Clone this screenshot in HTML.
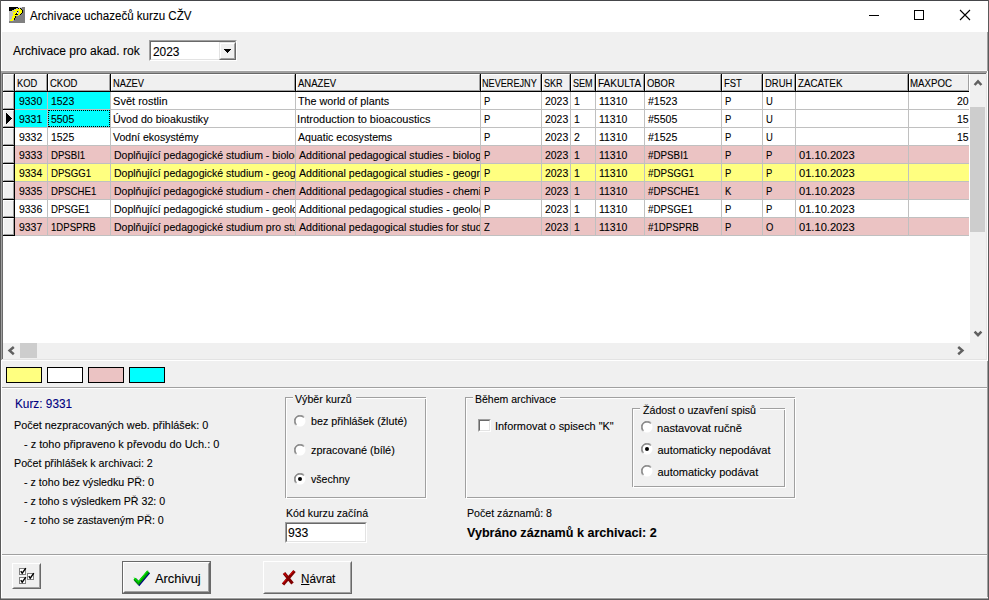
<!DOCTYPE html><html><head><meta charset="utf-8"><title>Archivace</title><style>*{margin:0;padding:0;box-sizing:border-box}
html,body{width:989px;height:600px;overflow:hidden}
body{position:relative;background:#f0f0f0;font-family:"Liberation Sans",sans-serif;font-size:11px;color:#000}
.a{position:absolute}
.t{position:absolute;white-space:pre;line-height:20px;transform-origin:0 0;-webkit-text-stroke:0.1px currentColor}
</style></head><body>
<div class="a" style="left:1px;top:1px;width:987px;height:31px;background:#fff"></div>
<svg class="a" style="left:9px;top:7px" width="16" height="16" viewBox="0 0 16 16" shape-rendering="crispEdges"><rect x="0" y="0" width="9" height="1" fill="#000"/><rect x="9" y="0" width="4" height="1" fill="#d8d8e8"/><rect x="13" y="0" width="3" height="1" fill="#808080"/><rect x="0" y="1" width="7" height="1" fill="#000"/><rect x="7" y="1" width="2" height="1" fill="#a8a8d8"/><rect x="9" y="1" width="1" height="1" fill="#000"/><rect x="10" y="1" width="1" height="1" fill="#ffff00"/><rect x="11" y="1" width="1" height="1" fill="#000"/><rect x="12" y="1" width="4" height="1" fill="#808080"/><rect x="0" y="2" width="5" height="1" fill="#000"/><rect x="5" y="2" width="1" height="1" fill="#a8a8d8"/><rect x="6" y="2" width="6" height="1" fill="#ffff00"/><rect x="12" y="2" width="1" height="1" fill="#000"/><rect x="13" y="2" width="3" height="1" fill="#808080"/><rect x="0" y="3" width="3" height="1" fill="#000"/><rect x="3" y="3" width="1" height="1" fill="#a8a8d8"/><rect x="4" y="3" width="9" height="1" fill="#ffff00"/><rect x="13" y="3" width="1" height="1" fill="#000"/><rect x="14" y="3" width="2" height="1" fill="#808080"/><rect x="0" y="4" width="3" height="1" fill="#c0c0c0"/><rect x="3" y="4" width="1" height="1" fill="#ffff00"/><rect x="4" y="4" width="2" height="1" fill="#a8a8d8"/><rect x="6" y="4" width="2" height="1" fill="#ffff00"/><rect x="8" y="4" width="1" height="1" fill="#000"/><rect x="9" y="4" width="1" height="1" fill="#a8a8d8"/><rect x="10" y="4" width="3" height="1" fill="#ffff00"/><rect x="13" y="4" width="1" height="1" fill="#000"/><rect x="14" y="4" width="2" height="1" fill="#808080"/><rect x="0" y="5" width="4" height="1" fill="#c0c0c0"/><rect x="4" y="5" width="4" height="1" fill="#ffff00"/><rect x="8" y="5" width="1" height="1" fill="#d8d8e8"/><rect x="9" y="5" width="1" height="1" fill="#a8a8d8"/><rect x="10" y="5" width="3" height="1" fill="#ffff00"/><rect x="13" y="5" width="1" height="1" fill="#000"/><rect x="14" y="5" width="2" height="1" fill="#808080"/><rect x="0" y="6" width="4" height="1" fill="#c0c0c0"/><rect x="4" y="6" width="3" height="1" fill="#ffff00"/><rect x="7" y="6" width="1" height="1" fill="#000"/><rect x="8" y="6" width="1" height="1" fill="#d8d8e8"/><rect x="9" y="6" width="3" height="1" fill="#ffff00"/><rect x="12" y="6" width="1" height="1" fill="#000"/><rect x="13" y="6" width="3" height="1" fill="#808080"/><rect x="0" y="7" width="4" height="1" fill="#c0c0c0"/><rect x="4" y="7" width="2" height="1" fill="#ffff00"/><rect x="6" y="7" width="3" height="1" fill="#000"/><rect x="9" y="7" width="2" height="1" fill="#ffff00"/><rect x="11" y="7" width="1" height="1" fill="#000"/><rect x="12" y="7" width="4" height="1" fill="#808080"/><rect x="0" y="8" width="4" height="1" fill="#c0c0c0"/><rect x="4" y="8" width="5" height="1" fill="#ffff00"/><rect x="9" y="8" width="1" height="1" fill="#a8a8d8"/><rect x="10" y="8" width="6" height="1" fill="#808080"/><rect x="0" y="9" width="3" height="1" fill="#c0c0c0"/><rect x="3" y="9" width="3" height="1" fill="#ffff00"/><rect x="6" y="9" width="1" height="1" fill="#000"/><rect x="7" y="9" width="9" height="1" fill="#808080"/><rect x="0" y="10" width="3" height="1" fill="#c0c0c0"/><rect x="3" y="10" width="3" height="1" fill="#ffff00"/><rect x="6" y="10" width="1" height="1" fill="#000"/><rect x="7" y="10" width="9" height="1" fill="#808080"/><rect x="0" y="11" width="3" height="1" fill="#c0c0c0"/><rect x="3" y="11" width="2" height="1" fill="#ffff00"/><rect x="5" y="11" width="1" height="1" fill="#000"/><rect x="6" y="11" width="10" height="1" fill="#808080"/><rect x="0" y="12" width="2" height="1" fill="#c0c0c0"/><rect x="2" y="12" width="3" height="1" fill="#ffff00"/><rect x="5" y="12" width="1" height="1" fill="#000"/><rect x="6" y="12" width="10" height="1" fill="#808080"/><rect x="0" y="13" width="1" height="1" fill="#c0c0c0"/><rect x="1" y="13" width="3" height="1" fill="#ffff00"/><rect x="4" y="13" width="1" height="1" fill="#a8a8d8"/><rect x="5" y="13" width="11" height="1" fill="#808080"/><rect x="0" y="14" width="16" height="1" fill="#808080"/><rect x="0" y="15" width="16" height="1" fill="#808080"/></svg>
<div class="t" style="left:30.00px;top:6px;font-size:12px;transform:scaleX(0.9648);">Archivace uchazečů kurzu CŽV</div>
<div class="a" style="left:869px;top:15px;width:10px;height:1px;background:#000"></div>
<div class="a" style="left:914px;top:10px;width:10px;height:10px;border:1px solid #000"></div>
<svg class="a" style="left:959px;top:9px" width="12" height="12" viewBox="0 0 12 12"><path d="M1 1L11 11M11 1L1 11" stroke="#000" stroke-width="1.1"/></svg>
<div class="a" style="left:1px;top:32px;width:1px;height:39px;background:#fff"></div>
<div class="a" style="left:987px;top:32px;width:1px;height:39px;background:#a0a0a0"></div>
<div class="t" style="left:13.30px;top:41px;font-size:12px;transform:scaleX(1.0050);">Archivace pro akad. rok</div>
<div class="a" style="left:149px;top:40px;width:88px;height:21px;background:#fff;border:1px solid;border-color:#a0a0a0 #fff #fff #a0a0a0"></div>
<div class="a" style="left:150px;top:41px;width:86px;height:19px;border:1px solid;border-color:#696969 #e3e3e3 #e3e3e3 #696969"></div>
<div class="t" style="left:153.40px;top:42px;font-size:12px;transform:scaleX(0.9918);">2023</div>
<div class="a" style="left:219px;top:42px;width:17px;height:18px;background:#f0f0f0;border:1px solid;border-color:#e3e3e3 #696969 #696969 #e3e3e3"></div>
<div class="a" style="left:220px;top:43px;width:15px;height:16px;border:1px solid;border-color:#fff #a0a0a0 #a0a0a0 #fff"></div>
<svg class="a" style="left:224px;top:49px" width="7" height="4" viewBox="0 0 7 4" shape-rendering="crispEdges"><rect x="0" y="0" width="7" height="1"/><rect x="1" y="1" width="5" height="1"/><rect x="2" y="2" width="3" height="1"/><rect x="3" y="3" width="1" height="1"/></svg>
<div class="a" style="left:1px;top:70px;width:986px;height:1px;background:#f8f8f8"></div>
<div class="a" style="left:1px;top:71px;width:987px;height:290px;background:#fff"></div>
<div class="a" style="left:1px;top:71px;width:987px;height:2px;background:#a0a0a0"></div>
<div class="a" style="left:1px;top:71px;width:1px;height:289px;background:#a0a0a0"></div>
<div class="a" style="left:2px;top:73px;width:985px;height:1px;background:#696969"></div>
<div class="a" style="left:2px;top:73px;width:1px;height:286px;background:#696969"></div>
<div class="a" style="left:987px;top:71px;width:1px;height:290px;background:#fff"></div>
<div class="a" style="left:1px;top:360px;width:987px;height:1px;background:#fff"></div>
<div class="a" style="left:2px;top:359px;width:985px;height:1px;background:#e3e3e3"></div>
<div class="a" style="left:986px;top:73px;width:1px;height:287px;background:#e3e3e3"></div>
<div class="a" style="left:3px;top:74px;width:11px;height:17px;background:#f0f0f0;border-top:1px solid #fff;border-left:1px solid #fff;border-right:1px solid #a0a0a0;border-bottom:1px solid #a0a0a0"></div>
<div class="a" style="left:14px;top:74px;width:1px;height:18px;background:#000"></div>
<div class="a" style="left:15px;top:74px;width:32px;height:17px;background:#f0f0f0;border-top:1px solid #fff;border-left:1px solid #fff;border-right:1px solid #a0a0a0;border-bottom:1px solid #a0a0a0"></div>
<div class="a" style="left:47px;top:74px;width:1px;height:18px;background:#000"></div>
<div class="t" style="left:16.70px;top:73px;transform:scaleX(0.8496);">KOD</div>
<div class="a" style="left:48px;top:74px;width:62px;height:17px;background:#f0f0f0;border-top:1px solid #fff;border-left:1px solid #fff;border-right:1px solid #a0a0a0;border-bottom:1px solid #a0a0a0"></div>
<div class="a" style="left:110px;top:74px;width:1px;height:18px;background:#000"></div>
<div class="t" style="left:49.70px;top:73px;transform:scaleX(0.8638);">CKOD</div>
<div class="a" style="left:111px;top:74px;width:184px;height:17px;background:#f0f0f0;border-top:1px solid #fff;border-left:1px solid #fff;border-right:1px solid #a0a0a0;border-bottom:1px solid #a0a0a0"></div>
<div class="a" style="left:295px;top:74px;width:1px;height:18px;background:#000"></div>
<div class="t" style="left:112.80px;top:73px;transform:scaleX(0.8463);">NAZEV</div>
<div class="a" style="left:296px;top:74px;width:184px;height:17px;background:#f0f0f0;border-top:1px solid #fff;border-left:1px solid #fff;border-right:1px solid #a0a0a0;border-bottom:1px solid #a0a0a0"></div>
<div class="a" style="left:480px;top:74px;width:1px;height:18px;background:#000"></div>
<div class="t" style="left:297.50px;top:73px;transform:scaleX(0.8663);">ANAZEV</div>
<div class="a" style="left:481px;top:74px;width:60px;height:17px;background:#f0f0f0;border-top:1px solid #fff;border-left:1px solid #fff;border-right:1px solid #a0a0a0;border-bottom:1px solid #a0a0a0"></div>
<div class="a" style="left:541px;top:74px;width:1px;height:18px;background:#000"></div>
<div class="t" style="left:482.40px;top:73px;transform:scaleX(0.8293);">NEVEREJNY</div>
<div class="a" style="left:542px;top:74px;width:28px;height:17px;background:#f0f0f0;border-top:1px solid #fff;border-left:1px solid #fff;border-right:1px solid #a0a0a0;border-bottom:1px solid #a0a0a0"></div>
<div class="a" style="left:570px;top:74px;width:1px;height:18px;background:#000"></div>
<div class="t" style="left:543.50px;top:73px;transform:scaleX(0.8247);">SKR</div>
<div class="a" style="left:571px;top:74px;width:24px;height:17px;background:#f0f0f0;border-top:1px solid #fff;border-left:1px solid #fff;border-right:1px solid #a0a0a0;border-bottom:1px solid #a0a0a0"></div>
<div class="a" style="left:595px;top:74px;width:1px;height:18px;background:#000"></div>
<div class="t" style="left:572.50px;top:73px;transform:scaleX(0.8237);">SEM</div>
<div class="a" style="left:596px;top:74px;width:48px;height:17px;background:#f0f0f0;border-top:1px solid #fff;border-left:1px solid #fff;border-right:1px solid #a0a0a0;border-bottom:1px solid #a0a0a0"></div>
<div class="a" style="left:644px;top:74px;width:1px;height:18px;background:#000"></div>
<div class="t" style="left:597.50px;top:73px;transform:scaleX(0.9117);">FAKULTA</div>
<div class="a" style="left:645px;top:74px;width:76px;height:17px;background:#f0f0f0;border-top:1px solid #fff;border-left:1px solid #fff;border-right:1px solid #a0a0a0;border-bottom:1px solid #a0a0a0"></div>
<div class="a" style="left:721px;top:74px;width:1px;height:18px;background:#000"></div>
<div class="t" style="left:646.70px;top:73px;transform:scaleX(0.8567);">OBOR</div>
<div class="a" style="left:722px;top:74px;width:40px;height:17px;background:#f0f0f0;border-top:1px solid #fff;border-left:1px solid #fff;border-right:1px solid #a0a0a0;border-bottom:1px solid #a0a0a0"></div>
<div class="a" style="left:762px;top:74px;width:1px;height:18px;background:#000"></div>
<div class="t" style="left:723.80px;top:73px;transform:scaleX(0.8549);">FST</div>
<div class="a" style="left:763px;top:74px;width:32px;height:17px;background:#f0f0f0;border-top:1px solid #fff;border-left:1px solid #fff;border-right:1px solid #a0a0a0;border-bottom:1px solid #a0a0a0"></div>
<div class="a" style="left:795px;top:74px;width:1px;height:18px;background:#000"></div>
<div class="t" style="left:764.70px;top:73px;transform:scaleX(0.8576);">DRUH</div>
<div class="a" style="left:796px;top:74px;width:112px;height:17px;background:#f0f0f0;border-top:1px solid #fff;border-left:1px solid #fff;border-right:1px solid #a0a0a0;border-bottom:1px solid #a0a0a0"></div>
<div class="a" style="left:908px;top:74px;width:1px;height:18px;background:#000"></div>
<div class="t" style="left:797.50px;top:73px;transform:scaleX(0.8897);">ZACATEK</div>
<div class="a" style="left:909px;top:74px;width:60px;height:17px;background:#f0f0f0;border-top:1px solid #fff;border-left:1px solid #fff;border-right:1px solid #a0a0a0;border-bottom:1px solid #a0a0a0"></div>
<div class="t" style="left:910.20px;top:73px;transform:scaleX(0.8800);">MAXPOC</div>
<div class="a" style="left:3px;top:91px;width:966px;height:1px;background:#000"></div>
<div class="a" style="left:3px;top:92px;width:11px;height:17px;background:#f0f0f0;border-top:1px solid #fff;border-left:1px solid #fff;border-right:1px solid #a0a0a0;border-bottom:1px solid #a0a0a0"></div>
<div class="a" style="left:3px;top:109px;width:12px;height:1px;background:#000"></div>
<div class="a" style="left:14px;top:92px;width:1px;height:17px;background:#000"></div>
<div class="a" style="left:15px;top:92px;width:32px;height:17px;background:#00ffff"></div>
<div class="a" style="left:47px;top:92px;width:1px;height:18px;background:#c0c0c0"></div>
<div class="a" style="left:48px;top:92px;width:62px;height:17px;background:#00ffff"></div>
<div class="a" style="left:110px;top:92px;width:1px;height:18px;background:#c0c0c0"></div>
<div class="a" style="left:111px;top:92px;width:184px;height:17px;background:#ffffff"></div>
<div class="a" style="left:295px;top:92px;width:1px;height:18px;background:#c0c0c0"></div>
<div class="a" style="left:296px;top:92px;width:184px;height:17px;background:#ffffff"></div>
<div class="a" style="left:480px;top:92px;width:1px;height:18px;background:#c0c0c0"></div>
<div class="a" style="left:481px;top:92px;width:60px;height:17px;background:#ffffff"></div>
<div class="a" style="left:541px;top:92px;width:1px;height:18px;background:#c0c0c0"></div>
<div class="a" style="left:542px;top:92px;width:28px;height:17px;background:#ffffff"></div>
<div class="a" style="left:570px;top:92px;width:1px;height:18px;background:#c0c0c0"></div>
<div class="a" style="left:571px;top:92px;width:24px;height:17px;background:#ffffff"></div>
<div class="a" style="left:595px;top:92px;width:1px;height:18px;background:#c0c0c0"></div>
<div class="a" style="left:596px;top:92px;width:48px;height:17px;background:#ffffff"></div>
<div class="a" style="left:644px;top:92px;width:1px;height:18px;background:#c0c0c0"></div>
<div class="a" style="left:645px;top:92px;width:76px;height:17px;background:#ffffff"></div>
<div class="a" style="left:721px;top:92px;width:1px;height:18px;background:#c0c0c0"></div>
<div class="a" style="left:722px;top:92px;width:40px;height:17px;background:#ffffff"></div>
<div class="a" style="left:762px;top:92px;width:1px;height:18px;background:#c0c0c0"></div>
<div class="a" style="left:763px;top:92px;width:32px;height:17px;background:#ffffff"></div>
<div class="a" style="left:795px;top:92px;width:1px;height:18px;background:#c0c0c0"></div>
<div class="a" style="left:796px;top:92px;width:112px;height:17px;background:#ffffff"></div>
<div class="a" style="left:908px;top:92px;width:1px;height:18px;background:#c0c0c0"></div>
<div class="a" style="left:909px;top:92px;width:60px;height:17px;background:#ffffff"></div>
<div class="a" style="left:15px;top:109px;width:954px;height:1px;background:#c0c0c0"></div>
<div class="a" style="left:3px;top:110px;width:11px;height:17px;background:#f0f0f0;border-top:1px solid #fff;border-left:1px solid #fff;border-right:1px solid #a0a0a0;border-bottom:1px solid #a0a0a0"></div>
<div class="a" style="left:3px;top:127px;width:12px;height:1px;background:#000"></div>
<div class="a" style="left:14px;top:110px;width:1px;height:17px;background:#000"></div>
<svg class="a" style="left:6px;top:113px" width="6" height="11" shape-rendering="crispEdges"><rect x="0" y="0" width="1" height="1"/><rect x="0" y="1" width="2" height="1"/><rect x="0" y="2" width="3" height="1"/><rect x="0" y="3" width="4" height="1"/><rect x="0" y="4" width="5" height="1"/><rect x="0" y="5" width="6" height="1"/><rect x="0" y="6" width="5" height="1"/><rect x="0" y="7" width="4" height="1"/><rect x="0" y="8" width="3" height="1"/><rect x="0" y="9" width="2" height="1"/><rect x="0" y="10" width="1" height="1"/></svg>
<div class="a" style="left:15px;top:110px;width:32px;height:17px;background:#00ffff"></div>
<div class="a" style="left:47px;top:110px;width:1px;height:18px;background:#c0c0c0"></div>
<div class="a" style="left:48px;top:110px;width:62px;height:17px;background:#00ffff"></div>
<div class="a" style="left:110px;top:110px;width:1px;height:18px;background:#c0c0c0"></div>
<div class="a" style="left:111px;top:110px;width:184px;height:17px;background:#ffffff"></div>
<div class="a" style="left:295px;top:110px;width:1px;height:18px;background:#c0c0c0"></div>
<div class="a" style="left:296px;top:110px;width:184px;height:17px;background:#ffffff"></div>
<div class="a" style="left:480px;top:110px;width:1px;height:18px;background:#c0c0c0"></div>
<div class="a" style="left:481px;top:110px;width:60px;height:17px;background:#ffffff"></div>
<div class="a" style="left:541px;top:110px;width:1px;height:18px;background:#c0c0c0"></div>
<div class="a" style="left:542px;top:110px;width:28px;height:17px;background:#ffffff"></div>
<div class="a" style="left:570px;top:110px;width:1px;height:18px;background:#c0c0c0"></div>
<div class="a" style="left:571px;top:110px;width:24px;height:17px;background:#ffffff"></div>
<div class="a" style="left:595px;top:110px;width:1px;height:18px;background:#c0c0c0"></div>
<div class="a" style="left:596px;top:110px;width:48px;height:17px;background:#ffffff"></div>
<div class="a" style="left:644px;top:110px;width:1px;height:18px;background:#c0c0c0"></div>
<div class="a" style="left:645px;top:110px;width:76px;height:17px;background:#ffffff"></div>
<div class="a" style="left:721px;top:110px;width:1px;height:18px;background:#c0c0c0"></div>
<div class="a" style="left:722px;top:110px;width:40px;height:17px;background:#ffffff"></div>
<div class="a" style="left:762px;top:110px;width:1px;height:18px;background:#c0c0c0"></div>
<div class="a" style="left:763px;top:110px;width:32px;height:17px;background:#ffffff"></div>
<div class="a" style="left:795px;top:110px;width:1px;height:18px;background:#c0c0c0"></div>
<div class="a" style="left:796px;top:110px;width:112px;height:17px;background:#ffffff"></div>
<div class="a" style="left:908px;top:110px;width:1px;height:18px;background:#c0c0c0"></div>
<div class="a" style="left:909px;top:110px;width:60px;height:17px;background:#ffffff"></div>
<div class="a" style="left:15px;top:127px;width:954px;height:1px;background:#c0c0c0"></div>
<div class="a" style="left:3px;top:128px;width:11px;height:17px;background:#f0f0f0;border-top:1px solid #fff;border-left:1px solid #fff;border-right:1px solid #a0a0a0;border-bottom:1px solid #a0a0a0"></div>
<div class="a" style="left:3px;top:145px;width:12px;height:1px;background:#000"></div>
<div class="a" style="left:14px;top:128px;width:1px;height:17px;background:#000"></div>
<div class="a" style="left:15px;top:128px;width:32px;height:17px;background:#ffffff"></div>
<div class="a" style="left:47px;top:128px;width:1px;height:18px;background:#c0c0c0"></div>
<div class="a" style="left:48px;top:128px;width:62px;height:17px;background:#ffffff"></div>
<div class="a" style="left:110px;top:128px;width:1px;height:18px;background:#c0c0c0"></div>
<div class="a" style="left:111px;top:128px;width:184px;height:17px;background:#ffffff"></div>
<div class="a" style="left:295px;top:128px;width:1px;height:18px;background:#c0c0c0"></div>
<div class="a" style="left:296px;top:128px;width:184px;height:17px;background:#ffffff"></div>
<div class="a" style="left:480px;top:128px;width:1px;height:18px;background:#c0c0c0"></div>
<div class="a" style="left:481px;top:128px;width:60px;height:17px;background:#ffffff"></div>
<div class="a" style="left:541px;top:128px;width:1px;height:18px;background:#c0c0c0"></div>
<div class="a" style="left:542px;top:128px;width:28px;height:17px;background:#ffffff"></div>
<div class="a" style="left:570px;top:128px;width:1px;height:18px;background:#c0c0c0"></div>
<div class="a" style="left:571px;top:128px;width:24px;height:17px;background:#ffffff"></div>
<div class="a" style="left:595px;top:128px;width:1px;height:18px;background:#c0c0c0"></div>
<div class="a" style="left:596px;top:128px;width:48px;height:17px;background:#ffffff"></div>
<div class="a" style="left:644px;top:128px;width:1px;height:18px;background:#c0c0c0"></div>
<div class="a" style="left:645px;top:128px;width:76px;height:17px;background:#ffffff"></div>
<div class="a" style="left:721px;top:128px;width:1px;height:18px;background:#c0c0c0"></div>
<div class="a" style="left:722px;top:128px;width:40px;height:17px;background:#ffffff"></div>
<div class="a" style="left:762px;top:128px;width:1px;height:18px;background:#c0c0c0"></div>
<div class="a" style="left:763px;top:128px;width:32px;height:17px;background:#ffffff"></div>
<div class="a" style="left:795px;top:128px;width:1px;height:18px;background:#c0c0c0"></div>
<div class="a" style="left:796px;top:128px;width:112px;height:17px;background:#ffffff"></div>
<div class="a" style="left:908px;top:128px;width:1px;height:18px;background:#c0c0c0"></div>
<div class="a" style="left:909px;top:128px;width:60px;height:17px;background:#ffffff"></div>
<div class="a" style="left:15px;top:145px;width:954px;height:1px;background:#c0c0c0"></div>
<div class="a" style="left:3px;top:146px;width:11px;height:17px;background:#f0f0f0;border-top:1px solid #fff;border-left:1px solid #fff;border-right:1px solid #a0a0a0;border-bottom:1px solid #a0a0a0"></div>
<div class="a" style="left:3px;top:163px;width:12px;height:1px;background:#000"></div>
<div class="a" style="left:14px;top:146px;width:1px;height:17px;background:#000"></div>
<div class="a" style="left:15px;top:146px;width:32px;height:17px;background:#ebc3c3"></div>
<div class="a" style="left:47px;top:146px;width:1px;height:18px;background:#c0c0c0"></div>
<div class="a" style="left:48px;top:146px;width:62px;height:17px;background:#ebc3c3"></div>
<div class="a" style="left:110px;top:146px;width:1px;height:18px;background:#c0c0c0"></div>
<div class="a" style="left:111px;top:146px;width:184px;height:17px;background:#ebc3c3"></div>
<div class="a" style="left:295px;top:146px;width:1px;height:18px;background:#c0c0c0"></div>
<div class="a" style="left:296px;top:146px;width:184px;height:17px;background:#ebc3c3"></div>
<div class="a" style="left:480px;top:146px;width:1px;height:18px;background:#c0c0c0"></div>
<div class="a" style="left:481px;top:146px;width:60px;height:17px;background:#ebc3c3"></div>
<div class="a" style="left:541px;top:146px;width:1px;height:18px;background:#c0c0c0"></div>
<div class="a" style="left:542px;top:146px;width:28px;height:17px;background:#ebc3c3"></div>
<div class="a" style="left:570px;top:146px;width:1px;height:18px;background:#c0c0c0"></div>
<div class="a" style="left:571px;top:146px;width:24px;height:17px;background:#ebc3c3"></div>
<div class="a" style="left:595px;top:146px;width:1px;height:18px;background:#c0c0c0"></div>
<div class="a" style="left:596px;top:146px;width:48px;height:17px;background:#ebc3c3"></div>
<div class="a" style="left:644px;top:146px;width:1px;height:18px;background:#c0c0c0"></div>
<div class="a" style="left:645px;top:146px;width:76px;height:17px;background:#ebc3c3"></div>
<div class="a" style="left:721px;top:146px;width:1px;height:18px;background:#c0c0c0"></div>
<div class="a" style="left:722px;top:146px;width:40px;height:17px;background:#ebc3c3"></div>
<div class="a" style="left:762px;top:146px;width:1px;height:18px;background:#c0c0c0"></div>
<div class="a" style="left:763px;top:146px;width:32px;height:17px;background:#ebc3c3"></div>
<div class="a" style="left:795px;top:146px;width:1px;height:18px;background:#c0c0c0"></div>
<div class="a" style="left:796px;top:146px;width:112px;height:17px;background:#ebc3c3"></div>
<div class="a" style="left:908px;top:146px;width:1px;height:18px;background:#c0c0c0"></div>
<div class="a" style="left:909px;top:146px;width:60px;height:17px;background:#ebc3c3"></div>
<div class="a" style="left:15px;top:163px;width:954px;height:1px;background:#c0c0c0"></div>
<div class="a" style="left:3px;top:164px;width:11px;height:17px;background:#f0f0f0;border-top:1px solid #fff;border-left:1px solid #fff;border-right:1px solid #a0a0a0;border-bottom:1px solid #a0a0a0"></div>
<div class="a" style="left:3px;top:181px;width:12px;height:1px;background:#000"></div>
<div class="a" style="left:14px;top:164px;width:1px;height:17px;background:#000"></div>
<div class="a" style="left:15px;top:164px;width:32px;height:17px;background:#ffff80"></div>
<div class="a" style="left:47px;top:164px;width:1px;height:18px;background:#c0c0c0"></div>
<div class="a" style="left:48px;top:164px;width:62px;height:17px;background:#ffff80"></div>
<div class="a" style="left:110px;top:164px;width:1px;height:18px;background:#c0c0c0"></div>
<div class="a" style="left:111px;top:164px;width:184px;height:17px;background:#ffff80"></div>
<div class="a" style="left:295px;top:164px;width:1px;height:18px;background:#c0c0c0"></div>
<div class="a" style="left:296px;top:164px;width:184px;height:17px;background:#ffff80"></div>
<div class="a" style="left:480px;top:164px;width:1px;height:18px;background:#c0c0c0"></div>
<div class="a" style="left:481px;top:164px;width:60px;height:17px;background:#ffff80"></div>
<div class="a" style="left:541px;top:164px;width:1px;height:18px;background:#c0c0c0"></div>
<div class="a" style="left:542px;top:164px;width:28px;height:17px;background:#ffff80"></div>
<div class="a" style="left:570px;top:164px;width:1px;height:18px;background:#c0c0c0"></div>
<div class="a" style="left:571px;top:164px;width:24px;height:17px;background:#ffff80"></div>
<div class="a" style="left:595px;top:164px;width:1px;height:18px;background:#c0c0c0"></div>
<div class="a" style="left:596px;top:164px;width:48px;height:17px;background:#ffff80"></div>
<div class="a" style="left:644px;top:164px;width:1px;height:18px;background:#c0c0c0"></div>
<div class="a" style="left:645px;top:164px;width:76px;height:17px;background:#ffff80"></div>
<div class="a" style="left:721px;top:164px;width:1px;height:18px;background:#c0c0c0"></div>
<div class="a" style="left:722px;top:164px;width:40px;height:17px;background:#ffff80"></div>
<div class="a" style="left:762px;top:164px;width:1px;height:18px;background:#c0c0c0"></div>
<div class="a" style="left:763px;top:164px;width:32px;height:17px;background:#ffff80"></div>
<div class="a" style="left:795px;top:164px;width:1px;height:18px;background:#c0c0c0"></div>
<div class="a" style="left:796px;top:164px;width:112px;height:17px;background:#ffff80"></div>
<div class="a" style="left:908px;top:164px;width:1px;height:18px;background:#c0c0c0"></div>
<div class="a" style="left:909px;top:164px;width:60px;height:17px;background:#ffff80"></div>
<div class="a" style="left:15px;top:181px;width:954px;height:1px;background:#c0c0c0"></div>
<div class="a" style="left:3px;top:182px;width:11px;height:17px;background:#f0f0f0;border-top:1px solid #fff;border-left:1px solid #fff;border-right:1px solid #a0a0a0;border-bottom:1px solid #a0a0a0"></div>
<div class="a" style="left:3px;top:199px;width:12px;height:1px;background:#000"></div>
<div class="a" style="left:14px;top:182px;width:1px;height:17px;background:#000"></div>
<div class="a" style="left:15px;top:182px;width:32px;height:17px;background:#ebc3c3"></div>
<div class="a" style="left:47px;top:182px;width:1px;height:18px;background:#c0c0c0"></div>
<div class="a" style="left:48px;top:182px;width:62px;height:17px;background:#ebc3c3"></div>
<div class="a" style="left:110px;top:182px;width:1px;height:18px;background:#c0c0c0"></div>
<div class="a" style="left:111px;top:182px;width:184px;height:17px;background:#ebc3c3"></div>
<div class="a" style="left:295px;top:182px;width:1px;height:18px;background:#c0c0c0"></div>
<div class="a" style="left:296px;top:182px;width:184px;height:17px;background:#ebc3c3"></div>
<div class="a" style="left:480px;top:182px;width:1px;height:18px;background:#c0c0c0"></div>
<div class="a" style="left:481px;top:182px;width:60px;height:17px;background:#ebc3c3"></div>
<div class="a" style="left:541px;top:182px;width:1px;height:18px;background:#c0c0c0"></div>
<div class="a" style="left:542px;top:182px;width:28px;height:17px;background:#ebc3c3"></div>
<div class="a" style="left:570px;top:182px;width:1px;height:18px;background:#c0c0c0"></div>
<div class="a" style="left:571px;top:182px;width:24px;height:17px;background:#ebc3c3"></div>
<div class="a" style="left:595px;top:182px;width:1px;height:18px;background:#c0c0c0"></div>
<div class="a" style="left:596px;top:182px;width:48px;height:17px;background:#ebc3c3"></div>
<div class="a" style="left:644px;top:182px;width:1px;height:18px;background:#c0c0c0"></div>
<div class="a" style="left:645px;top:182px;width:76px;height:17px;background:#ebc3c3"></div>
<div class="a" style="left:721px;top:182px;width:1px;height:18px;background:#c0c0c0"></div>
<div class="a" style="left:722px;top:182px;width:40px;height:17px;background:#ebc3c3"></div>
<div class="a" style="left:762px;top:182px;width:1px;height:18px;background:#c0c0c0"></div>
<div class="a" style="left:763px;top:182px;width:32px;height:17px;background:#ebc3c3"></div>
<div class="a" style="left:795px;top:182px;width:1px;height:18px;background:#c0c0c0"></div>
<div class="a" style="left:796px;top:182px;width:112px;height:17px;background:#ebc3c3"></div>
<div class="a" style="left:908px;top:182px;width:1px;height:18px;background:#c0c0c0"></div>
<div class="a" style="left:909px;top:182px;width:60px;height:17px;background:#ebc3c3"></div>
<div class="a" style="left:15px;top:199px;width:954px;height:1px;background:#c0c0c0"></div>
<div class="a" style="left:3px;top:200px;width:11px;height:17px;background:#f0f0f0;border-top:1px solid #fff;border-left:1px solid #fff;border-right:1px solid #a0a0a0;border-bottom:1px solid #a0a0a0"></div>
<div class="a" style="left:3px;top:217px;width:12px;height:1px;background:#000"></div>
<div class="a" style="left:14px;top:200px;width:1px;height:17px;background:#000"></div>
<div class="a" style="left:15px;top:200px;width:32px;height:17px;background:#ffffff"></div>
<div class="a" style="left:47px;top:200px;width:1px;height:18px;background:#c0c0c0"></div>
<div class="a" style="left:48px;top:200px;width:62px;height:17px;background:#ffffff"></div>
<div class="a" style="left:110px;top:200px;width:1px;height:18px;background:#c0c0c0"></div>
<div class="a" style="left:111px;top:200px;width:184px;height:17px;background:#ffffff"></div>
<div class="a" style="left:295px;top:200px;width:1px;height:18px;background:#c0c0c0"></div>
<div class="a" style="left:296px;top:200px;width:184px;height:17px;background:#ffffff"></div>
<div class="a" style="left:480px;top:200px;width:1px;height:18px;background:#c0c0c0"></div>
<div class="a" style="left:481px;top:200px;width:60px;height:17px;background:#ffffff"></div>
<div class="a" style="left:541px;top:200px;width:1px;height:18px;background:#c0c0c0"></div>
<div class="a" style="left:542px;top:200px;width:28px;height:17px;background:#ffffff"></div>
<div class="a" style="left:570px;top:200px;width:1px;height:18px;background:#c0c0c0"></div>
<div class="a" style="left:571px;top:200px;width:24px;height:17px;background:#ffffff"></div>
<div class="a" style="left:595px;top:200px;width:1px;height:18px;background:#c0c0c0"></div>
<div class="a" style="left:596px;top:200px;width:48px;height:17px;background:#ffffff"></div>
<div class="a" style="left:644px;top:200px;width:1px;height:18px;background:#c0c0c0"></div>
<div class="a" style="left:645px;top:200px;width:76px;height:17px;background:#ffffff"></div>
<div class="a" style="left:721px;top:200px;width:1px;height:18px;background:#c0c0c0"></div>
<div class="a" style="left:722px;top:200px;width:40px;height:17px;background:#ffffff"></div>
<div class="a" style="left:762px;top:200px;width:1px;height:18px;background:#c0c0c0"></div>
<div class="a" style="left:763px;top:200px;width:32px;height:17px;background:#ffffff"></div>
<div class="a" style="left:795px;top:200px;width:1px;height:18px;background:#c0c0c0"></div>
<div class="a" style="left:796px;top:200px;width:112px;height:17px;background:#ffffff"></div>
<div class="a" style="left:908px;top:200px;width:1px;height:18px;background:#c0c0c0"></div>
<div class="a" style="left:909px;top:200px;width:60px;height:17px;background:#ffffff"></div>
<div class="a" style="left:15px;top:217px;width:954px;height:1px;background:#c0c0c0"></div>
<div class="a" style="left:3px;top:218px;width:11px;height:17px;background:#f0f0f0;border-top:1px solid #fff;border-left:1px solid #fff;border-right:1px solid #a0a0a0;border-bottom:1px solid #a0a0a0"></div>
<div class="a" style="left:3px;top:235px;width:12px;height:1px;background:#000"></div>
<div class="a" style="left:14px;top:218px;width:1px;height:17px;background:#000"></div>
<div class="a" style="left:15px;top:218px;width:32px;height:17px;background:#ebc3c3"></div>
<div class="a" style="left:47px;top:218px;width:1px;height:18px;background:#c0c0c0"></div>
<div class="a" style="left:48px;top:218px;width:62px;height:17px;background:#ebc3c3"></div>
<div class="a" style="left:110px;top:218px;width:1px;height:18px;background:#c0c0c0"></div>
<div class="a" style="left:111px;top:218px;width:184px;height:17px;background:#ebc3c3"></div>
<div class="a" style="left:295px;top:218px;width:1px;height:18px;background:#c0c0c0"></div>
<div class="a" style="left:296px;top:218px;width:184px;height:17px;background:#ebc3c3"></div>
<div class="a" style="left:480px;top:218px;width:1px;height:18px;background:#c0c0c0"></div>
<div class="a" style="left:481px;top:218px;width:60px;height:17px;background:#ebc3c3"></div>
<div class="a" style="left:541px;top:218px;width:1px;height:18px;background:#c0c0c0"></div>
<div class="a" style="left:542px;top:218px;width:28px;height:17px;background:#ebc3c3"></div>
<div class="a" style="left:570px;top:218px;width:1px;height:18px;background:#c0c0c0"></div>
<div class="a" style="left:571px;top:218px;width:24px;height:17px;background:#ebc3c3"></div>
<div class="a" style="left:595px;top:218px;width:1px;height:18px;background:#c0c0c0"></div>
<div class="a" style="left:596px;top:218px;width:48px;height:17px;background:#ebc3c3"></div>
<div class="a" style="left:644px;top:218px;width:1px;height:18px;background:#c0c0c0"></div>
<div class="a" style="left:645px;top:218px;width:76px;height:17px;background:#ebc3c3"></div>
<div class="a" style="left:721px;top:218px;width:1px;height:18px;background:#c0c0c0"></div>
<div class="a" style="left:722px;top:218px;width:40px;height:17px;background:#ebc3c3"></div>
<div class="a" style="left:762px;top:218px;width:1px;height:18px;background:#c0c0c0"></div>
<div class="a" style="left:763px;top:218px;width:32px;height:17px;background:#ebc3c3"></div>
<div class="a" style="left:795px;top:218px;width:1px;height:18px;background:#c0c0c0"></div>
<div class="a" style="left:796px;top:218px;width:112px;height:17px;background:#ebc3c3"></div>
<div class="a" style="left:908px;top:218px;width:1px;height:18px;background:#c0c0c0"></div>
<div class="a" style="left:909px;top:218px;width:60px;height:17px;background:#ebc3c3"></div>
<div class="a" style="left:15px;top:235px;width:954px;height:1px;background:#c0c0c0"></div>
<div class="a" style="left:15px;top:92px;width:32px;height:144px;overflow:hidden">
<div class="t" style="left:4.36px;top:-1px;transform:scaleX(0.9500);">9330</div>
<div class="t" style="left:4.36px;top:17px;transform:scaleX(0.9500);">9331</div>
<div class="t" style="left:4.36px;top:35px;transform:scaleX(0.9500);">9332</div>
<div class="t" style="left:4.36px;top:53px;transform:scaleX(0.9500);">9333</div>
<div class="t" style="left:4.36px;top:71px;transform:scaleX(0.9500);">9334</div>
<div class="t" style="left:4.36px;top:89px;transform:scaleX(0.9500);">9335</div>
<div class="t" style="left:4.36px;top:107px;transform:scaleX(0.9500);">9336</div>
<div class="t" style="left:4.36px;top:125px;transform:scaleX(0.9500);">9337</div>
</div>
<div class="a" style="left:48px;top:92px;width:62px;height:144px;overflow:hidden">
<div class="t" style="left:3.00px;top:-1px;transform:scaleX(0.9500);">1523</div>
<div class="t" style="left:2.50px;top:17px;transform:scaleX(0.9500);">5505</div>
<div class="t" style="left:3.00px;top:35px;transform:scaleX(0.9500);">1525</div>
<div class="t" style="left:2.50px;top:53px;transform:scaleX(0.8741);">DPSBI1</div>
<div class="t" style="left:2.50px;top:71px;transform:scaleX(0.8720);">DPSGG1</div>
<div class="t" style="left:2.50px;top:89px;transform:scaleX(0.8706);">DPSCHE1</div>
<div class="t" style="left:2.50px;top:107px;transform:scaleX(0.8723);">DPSGE1</div>
<div class="t" style="left:3.00px;top:125px;transform:scaleX(0.8707);">1DPSPRB</div>
</div>
<div class="a" style="left:111px;top:92px;width:184px;height:144px;overflow:hidden">
<div class="t" style="left:2.10px;top:-1px;">Svět rostlin</div>
<div class="t" style="left:2.10px;top:17px;transform:scaleX(0.9703);">Úvod do bioakustiky</div>
<div class="t" style="left:2.10px;top:35px;transform:scaleX(0.9580);">Vodní ekosystémy</div>
<div class="t" style="left:2.60px;top:53px;transform:scaleX(0.9548);">Doplňující pedagogické studium - biologie</div>
<div class="t" style="left:2.60px;top:71px;transform:scaleX(0.9548);">Doplňující pedagogické studium - geografie</div>
<div class="t" style="left:2.60px;top:89px;transform:scaleX(0.9548);">Doplňující pedagogické studium - chemie</div>
<div class="t" style="left:2.60px;top:107px;transform:scaleX(0.9548);">Doplňující pedagogické studium - geologie</div>
<div class="t" style="left:2.60px;top:125px;transform:scaleX(0.9548);">Doplňující pedagogické studium pro studenty</div>
</div>
<div class="a" style="left:296px;top:92px;width:184px;height:144px;overflow:hidden">
<div class="t" style="left:2.10px;top:-1px;transform:scaleX(0.9803);">The world of plants</div>
<div class="t" style="left:1.10px;top:17px;">Introduction to bioacoustics</div>
<div class="t" style="left:2.10px;top:35px;transform:scaleX(0.9622);">Aquatic ecosystems</div>
<div class="t" style="left:2.50px;top:53px;transform:scaleX(0.9700);">Additional pedagogical studies - biology</div>
<div class="t" style="left:2.50px;top:71px;transform:scaleX(0.9702);">Additional pedagogical studies - geography</div>
<div class="t" style="left:2.50px;top:89px;transform:scaleX(0.9702);">Additional pedagogical studies - chemistry</div>
<div class="t" style="left:2.50px;top:107px;transform:scaleX(0.9701);">Additional pedagogical studies - geology</div>
<div class="t" style="left:2.50px;top:125px;transform:scaleX(0.9697);">Additional pedagogical studies for students</div>
</div>
<div class="a" style="left:481px;top:92px;width:60px;height:144px;overflow:hidden">
<div class="t" style="left:2.50px;top:-1px;transform:scaleX(0.8600);">P</div>
<div class="t" style="left:2.50px;top:17px;transform:scaleX(0.8600);">P</div>
<div class="t" style="left:2.50px;top:35px;transform:scaleX(0.8600);">P</div>
<div class="t" style="left:2.50px;top:53px;transform:scaleX(0.8600);">P</div>
<div class="t" style="left:2.50px;top:71px;transform:scaleX(0.8600);">P</div>
<div class="t" style="left:2.50px;top:89px;transform:scaleX(0.8600);">P</div>
<div class="t" style="left:2.50px;top:107px;transform:scaleX(0.8600);">P</div>
<div class="t" style="left:2.50px;top:125px;transform:scaleX(0.8600);">Z</div>
</div>
<div class="a" style="left:542px;top:92px;width:28px;height:144px;overflow:hidden">
<div class="t" style="left:2.50px;top:-1px;transform:scaleX(0.9500);">2023</div>
<div class="t" style="left:2.50px;top:17px;transform:scaleX(0.9500);">2023</div>
<div class="t" style="left:2.50px;top:35px;transform:scaleX(0.9500);">2023</div>
<div class="t" style="left:2.50px;top:53px;transform:scaleX(0.9500);">2023</div>
<div class="t" style="left:2.50px;top:71px;transform:scaleX(0.9500);">2023</div>
<div class="t" style="left:2.50px;top:89px;transform:scaleX(0.9500);">2023</div>
<div class="t" style="left:2.50px;top:107px;transform:scaleX(0.9500);">2023</div>
<div class="t" style="left:2.50px;top:125px;transform:scaleX(0.9500);">2023</div>
</div>
<div class="a" style="left:571px;top:92px;width:24px;height:144px;overflow:hidden">
<div class="t" style="left:3.00px;top:-1px;transform:scaleX(0.9500);">1</div>
<div class="t" style="left:3.00px;top:17px;transform:scaleX(0.9500);">1</div>
<div class="t" style="left:2.50px;top:35px;transform:scaleX(0.9500);">2</div>
<div class="t" style="left:3.00px;top:53px;transform:scaleX(0.9500);">1</div>
<div class="t" style="left:3.00px;top:71px;transform:scaleX(0.9500);">1</div>
<div class="t" style="left:3.00px;top:89px;transform:scaleX(0.9500);">1</div>
<div class="t" style="left:3.00px;top:107px;transform:scaleX(0.9500);">1</div>
<div class="t" style="left:3.00px;top:125px;transform:scaleX(0.9500);">1</div>
</div>
<div class="a" style="left:596px;top:92px;width:48px;height:144px;overflow:hidden">
<div class="t" style="left:3.00px;top:-1px;transform:scaleX(0.9500);">11310</div>
<div class="t" style="left:3.00px;top:17px;transform:scaleX(0.9500);">11310</div>
<div class="t" style="left:3.00px;top:35px;transform:scaleX(0.9500);">11310</div>
<div class="t" style="left:3.00px;top:53px;transform:scaleX(0.9500);">11310</div>
<div class="t" style="left:3.00px;top:71px;transform:scaleX(0.9500);">11310</div>
<div class="t" style="left:3.00px;top:89px;transform:scaleX(0.9500);">11310</div>
<div class="t" style="left:3.00px;top:107px;transform:scaleX(0.9500);">11310</div>
<div class="t" style="left:3.00px;top:125px;transform:scaleX(0.9500);">11310</div>
</div>
<div class="a" style="left:645px;top:92px;width:76px;height:144px;overflow:hidden">
<div class="t" style="left:2.50px;top:-1px;transform:scaleX(0.9600);">#1523</div>
<div class="t" style="left:2.50px;top:17px;transform:scaleX(0.9600);">#5505</div>
<div class="t" style="left:2.50px;top:35px;transform:scaleX(0.9600);">#1525</div>
<div class="t" style="left:2.50px;top:53px;transform:scaleX(0.8911);">#DPSBI1</div>
<div class="t" style="left:2.50px;top:71px;transform:scaleX(0.8871);">#DPSGG1</div>
<div class="t" style="left:2.50px;top:89px;transform:scaleX(0.8842);">#DPSCHE1</div>
<div class="t" style="left:2.50px;top:107px;transform:scaleX(0.8877);">#DPSGE1</div>
<div class="t" style="left:2.50px;top:125px;transform:scaleX(0.8845);">#1DPSPRB</div>
</div>
<div class="a" style="left:722px;top:92px;width:40px;height:144px;overflow:hidden">
<div class="t" style="left:2.50px;top:-1px;transform:scaleX(0.8600);">P</div>
<div class="t" style="left:2.50px;top:17px;transform:scaleX(0.8600);">P</div>
<div class="t" style="left:2.50px;top:35px;transform:scaleX(0.8600);">P</div>
<div class="t" style="left:2.50px;top:53px;transform:scaleX(0.8600);">P</div>
<div class="t" style="left:2.50px;top:71px;transform:scaleX(0.8600);">P</div>
<div class="t" style="left:2.50px;top:89px;transform:scaleX(0.8600);">K</div>
<div class="t" style="left:2.50px;top:107px;transform:scaleX(0.8600);">P</div>
<div class="t" style="left:2.50px;top:125px;transform:scaleX(0.8600);">P</div>
</div>
<div class="a" style="left:763px;top:92px;width:32px;height:144px;overflow:hidden">
<div class="t" style="left:2.50px;top:-1px;transform:scaleX(0.8600);">U</div>
<div class="t" style="left:2.50px;top:17px;transform:scaleX(0.8600);">U</div>
<div class="t" style="left:2.50px;top:35px;transform:scaleX(0.8600);">U</div>
<div class="t" style="left:2.50px;top:53px;transform:scaleX(0.8600);">P</div>
<div class="t" style="left:2.50px;top:71px;transform:scaleX(0.8600);">P</div>
<div class="t" style="left:2.50px;top:89px;transform:scaleX(0.8600);">P</div>
<div class="t" style="left:2.50px;top:107px;transform:scaleX(0.8600);">P</div>
<div class="t" style="left:2.50px;top:125px;transform:scaleX(0.8600);">O</div>
</div>
<div class="a" style="left:796px;top:92px;width:112px;height:144px;overflow:hidden">
<div class="t" style="left:2.50px;top:53px;transform:scaleX(1.0111);">01.10.2023</div>
<div class="t" style="left:2.50px;top:71px;transform:scaleX(1.0111);">01.10.2023</div>
<div class="t" style="left:2.50px;top:89px;transform:scaleX(1.0111);">01.10.2023</div>
<div class="t" style="left:2.50px;top:107px;transform:scaleX(1.0111);">01.10.2023</div>
<div class="t" style="left:2.50px;top:125px;transform:scaleX(1.0111);">01.10.2023</div>
</div>
<div class="a" style="left:909px;top:92px;width:60px;height:144px;overflow:hidden">
<div class="t" style="left:48.49px;top:-1px;transform:scaleX(0.9500);">20</div>
<div class="t" style="left:48.49px;top:17px;transform:scaleX(0.9500);">15</div>
<div class="t" style="left:48.49px;top:35px;transform:scaleX(0.9500);">15</div>
</div>
<div class="a" style="left:48px;top:110px;width:62px;height:17px;border:1px dotted #000"></div>
<div class="a" style="left:970px;top:74px;width:16px;height:269px;background:#f0f0f0"></div>
<div class="a" style="left:970px;top:107px;width:15px;height:125px;background:#cdcdcd"></div>
<svg class="a" style="left:0;top:0;overflow:visible" width="1" height="1"><path d="M974.6,85.0 L978,81.4 L981.4,85.0" fill="none" stroke="#606060" stroke-width="2.5"/></svg>
<svg class="a" style="left:0;top:0;overflow:visible" width="1" height="1"><path d="M974.6,331.6 L978,335.2 L981.4,331.6" fill="none" stroke="#606060" stroke-width="2.5"/></svg>
<div class="a" style="left:3px;top:343px;width:983px;height:16px;background:#f0f0f0"></div>
<div class="a" style="left:20px;top:343px;width:17px;height:15px;background:#cdcdcd"></div>
<svg class="a" style="left:0;top:0;overflow:visible" width="1" height="1"><path d="M13.8,347.0 L9.6,350.6 L13.8,354.2" fill="none" stroke="#606060" stroke-width="2.5"/></svg>
<svg class="a" style="left:0;top:0;overflow:visible" width="1" height="1"><path d="M958.2,347.0 L962.4,350.6 L958.2,354.2" fill="none" stroke="#606060" stroke-width="2.5"/></svg>
<div class="a" style="left:6px;top:367px;width:36px;height:16px;background:#ffff80;border:1px solid #000"></div>
<div class="a" style="left:47px;top:367px;width:36px;height:16px;background:#ffffff;border:1px solid #000"></div>
<div class="a" style="left:88px;top:367px;width:36px;height:16px;background:#ebc3c3;border:1px solid #000"></div>
<div class="a" style="left:129px;top:367px;width:36px;height:16px;background:#00ffff;border:1px solid #000"></div>
<div class="a" style="left:1px;top:387px;width:987px;height:1px;background:#a0a0a0"></div>
<div class="a" style="left:1px;top:388px;width:987px;height:1px;background:#fff"></div>
<div class="t" style="left:14.50px;top:394px;font-size:12px;color:#000080;transform:scaleX(0.9835);">Kurz: 9331</div>
<div class="t" style="left:13.70px;top:415px;transform:scaleX(0.9869);">Počet nezpracovaných web. přihlášek: 0</div>
<div class="t" style="left:23.50px;top:434px;transform:scaleX(0.9951);">- z toho připraveno k převodu do Uch.: 0</div>
<div class="t" style="left:13.70px;top:453px;transform:scaleX(0.9745);">Počet přihlášek k archivaci: 2</div>
<div class="t" style="left:23.50px;top:472px;transform:scaleX(0.9703);">- z toho bez výsledku PŘ: 0</div>
<div class="t" style="left:23.50px;top:491px;transform:scaleX(0.9658);">- z toho s výsledkem PŘ 32: 0</div>
<div class="t" style="left:23.50px;top:510px;transform:scaleX(0.9732);">- z toho se zastaveným PŘ: 0</div>
<div class="a" style="left:285px;top:397px;width:141px;height:101px;border:1px solid #a0a0a0"></div>
<div class="a" style="left:286px;top:398px;width:141px;height:101px;border:1px solid #fff"></div>
<div class="a" style="left:293px;top:396px;width:63px;height:4px;background:#f0f0f0"></div>
<div class="t" style="left:295.40px;top:389px;transform:scaleX(0.9663);">Výběr kurzů</div>
<svg class="a" style="left:294px;top:415px" width="12" height="12" viewBox="0 0 12 12">
<circle cx="6" cy="6" r="5.5" fill="#fff"/>
<path d="M1.76 10.24A6 6 0 0 1 10.24 1.76" fill="none" stroke="#a0a0a0" stroke-width="1"/>
<path d="M2.46 9.54A5 5 0 0 1 9.54 2.46" fill="none" stroke="#696969" stroke-width="1"/>

</svg>
<div class="t" style="left:310.70px;top:411px;transform:scaleX(0.9748);">bez přihlášek (žluté)</div>
<svg class="a" style="left:294px;top:444px" width="12" height="12" viewBox="0 0 12 12">
<circle cx="6" cy="6" r="5.5" fill="#fff"/>
<path d="M1.76 10.24A6 6 0 0 1 10.24 1.76" fill="none" stroke="#a0a0a0" stroke-width="1"/>
<path d="M2.46 9.54A5 5 0 0 1 9.54 2.46" fill="none" stroke="#696969" stroke-width="1"/>

</svg>
<div class="t" style="left:310.70px;top:440px;transform:scaleX(0.9855);">zpracované (bílé)</div>
<svg class="a" style="left:294px;top:473px" width="12" height="12" viewBox="0 0 12 12">
<circle cx="6" cy="6" r="5.5" fill="#fff"/>
<path d="M1.76 10.24A6 6 0 0 1 10.24 1.76" fill="none" stroke="#a0a0a0" stroke-width="1"/>
<path d="M2.46 9.54A5 5 0 0 1 9.54 2.46" fill="none" stroke="#696969" stroke-width="1"/>
<circle cx="6" cy="6" r="2" fill="#000"/>
</svg>
<div class="t" style="left:310.70px;top:469px;transform:scaleX(0.9620);">všechny</div>
<div class="t" style="left:285.60px;top:503px;transform:scaleX(0.9654);">Kód kurzu začíná</div>
<div class="a" style="left:285px;top:522px;width:82px;height:21px;background:#fff;border:1px solid;border-color:#a0a0a0 #fff #fff #a0a0a0"></div>
<div class="a" style="left:286px;top:523px;width:80px;height:19px;border:1px solid;border-color:#696969 #e3e3e3 #e3e3e3 #696969"></div>
<div class="t" style="left:288.10px;top:523px;font-size:12px;transform:scaleX(1.0173);">933</div>
<div class="a" style="left:465px;top:397px;width:330px;height:101px;border:1px solid #a0a0a0"></div>
<div class="a" style="left:466px;top:398px;width:330px;height:101px;border:1px solid #fff"></div>
<div class="a" style="left:473px;top:396px;width:87px;height:4px;background:#f0f0f0"></div>
<div class="t" style="left:475.40px;top:389px;transform:scaleX(0.9532);">Během archivace</div>
<div class="a" style="left:478px;top:419px;width:13px;height:13px;background:#fff;border:1px solid;border-color:#a0a0a0 #fff #fff #a0a0a0"></div>
<div class="a" style="left:479px;top:420px;width:11px;height:11px;border:1px solid;border-color:#696969 #e3e3e3 #e3e3e3 #696969"></div>
<div class="t" style="left:494.91px;top:416px;transform:scaleX(0.9917);">Informovat o spisech "K"</div>
<div class="a" style="left:632px;top:408px;width:153px;height:79px;border:1px solid #a0a0a0"></div>
<div class="a" style="left:633px;top:409px;width:153px;height:79px;border:1px solid #fff"></div>
<div class="a" style="left:640px;top:407px;width:120px;height:4px;background:#f0f0f0"></div>
<div class="t" style="left:642.70px;top:400px;transform:scaleX(0.9677);">Žádost o uzavření spisů</div>
<svg class="a" style="left:641px;top:421px" width="12" height="12" viewBox="0 0 12 12">
<circle cx="6" cy="6" r="5.5" fill="#fff"/>
<path d="M1.76 10.24A6 6 0 0 1 10.24 1.76" fill="none" stroke="#a0a0a0" stroke-width="1"/>
<path d="M2.46 9.54A5 5 0 0 1 9.54 2.46" fill="none" stroke="#696969" stroke-width="1"/>

</svg>
<div class="t" style="left:657.40px;top:418px;transform:scaleX(1.0137);">nastavovat ručně</div>
<svg class="a" style="left:641px;top:443px" width="12" height="12" viewBox="0 0 12 12">
<circle cx="6" cy="6" r="5.5" fill="#fff"/>
<path d="M1.76 10.24A6 6 0 0 1 10.24 1.76" fill="none" stroke="#a0a0a0" stroke-width="1"/>
<path d="M2.46 9.54A5 5 0 0 1 9.54 2.46" fill="none" stroke="#696969" stroke-width="1"/>
<circle cx="6" cy="6" r="2" fill="#000"/>
</svg>
<div class="t" style="left:657.40px;top:440px;">automaticky nepodávat</div>
<svg class="a" style="left:641px;top:465px" width="12" height="12" viewBox="0 0 12 12">
<circle cx="6" cy="6" r="5.5" fill="#fff"/>
<path d="M1.76 10.24A6 6 0 0 1 10.24 1.76" fill="none" stroke="#a0a0a0" stroke-width="1"/>
<path d="M2.46 9.54A5 5 0 0 1 9.54 2.46" fill="none" stroke="#696969" stroke-width="1"/>

</svg>
<div class="t" style="left:657.40px;top:462px;">automaticky podávat</div>
<div class="t" style="left:467.00px;top:503px;transform:scaleX(0.9655);">Počet záznamů: 8</div>
<div class="t" style="left:467.40px;top:523px;font-size:12px;font-weight:bold;transform:scaleX(1.0481);">Vybráno záznamů k archivaci: 2</div>
<div class="a" style="left:1px;top:554px;width:987px;height:1px;background:#a0a0a0"></div>
<div class="a" style="left:1px;top:555px;width:987px;height:1px;background:#fff"></div>
<div class="a" style="left:12px;top:563px;width:29px;height:26px;background:#f0f0f0;border:1px solid;border-color:#fff #696969 #696969 #fff"></div>
<div class="a" style="left:13px;top:564px;width:27px;height:24px;border:1px solid;border-color:#f0f0f0 #a0a0a0 #a0a0a0 #f0f0f0"></div>
<svg class="a" style="left:19px;top:566px" width="17" height="19" viewBox="0 0 17 19">
<rect x="0.5" y="2.5" width="6" height="6" fill="#fff" stroke="#808080"/><rect x="0.5" y="11.5" width="6" height="6" fill="#fff" stroke="#808080"/><rect x="8.5" y="7.5" width="6" height="6" fill="#fff" stroke="#808080"/>
<path d="M1.8 5.2L3.2 7.2L6.8 2.2M1.8 14.2L3.2 16.2L6.8 11.2M9.8 10.2L11.2 12.2L14.8 7.2" fill="none" stroke="#000" stroke-width="1.4"/>
</svg>
<div class="a" style="left:122px;top:561px;width:89px;height:33px;background:#f0f0f0;border:1px solid #696969"></div>
<div class="a" style="left:123px;top:562px;width:87px;height:31px;background:#f0f0f0;border:1px solid;border-color:#fff #696969 #696969 #fff"></div>
<div class="a" style="left:124px;top:563px;width:85px;height:29px;border:1px solid;border-color:#f0f0f0 #a0a0a0 #a0a0a0 #f0f0f0"></div>
<svg class="a" style="left:130px;top:566px" width="24" height="24" viewBox="0 0 24 24">
<path d="M5.5 13L9.5 17.3L19.2 5.8" fill="none" stroke="#000080" stroke-width="3.2" transform="translate(-0.3,0.5)"/>
<path d="M5.5 13L9.5 17.3L19.2 5.8" fill="none" stroke="#00a000" stroke-width="3" transform="translate(-1,-0.3)"/>
<path d="M4.8 12.2L9.5 16.5L18.8 5.2" fill="none" stroke="#00ff00" stroke-width="1" transform="translate(-1,-0.6)"/>
</svg>
<div class="t" style="left:155.40px;top:569px;font-size:12px;transform:scaleX(1.0711);">Archivuj</div>
<div class="a" style="left:263px;top:561px;width:89px;height:33px;background:#f0f0f0;border:1px solid;border-color:#fff #696969 #696969 #fff"></div>
<div class="a" style="left:264px;top:562px;width:87px;height:31px;border:1px solid;border-color:#f0f0f0 #a0a0a0 #a0a0a0 #f0f0f0"></div>
<svg class="a" style="left:277px;top:566px" width="24" height="24" viewBox="0 0 24 24">
<path d="M7 7L15.5 17.5M17.5 5L6 18.5" fill="none" stroke="#800000" stroke-width="3.2"/>
<path d="M7 7L10 10.5M16.5 5L13 9M9.5 13.5L6 17.5" fill="none" stroke="#ff0000" stroke-width="1" opacity="0.8"/>
</svg>
<div class="t" style="left:301.20px;top:569px;font-size:12px;transform:scaleX(0.9720);"><u>N</u>ávrat</div>
<div class="a" style="left:1px;top:361px;width:1px;height:237px;background:#fff"></div>
<div class="a" style="left:987px;top:361px;width:1px;height:237px;background:#a0a0a0"></div>
<div class="a" style="left:1px;top:597px;width:987px;height:1px;background:#f8f8f8"></div>
<div class="a" style="left:0px;top:0px;width:989px;height:1px;background:#45464a"></div>
<div class="a" style="left:0px;top:0px;width:1px;height:600px;background:#5a5a5a"></div>
<div class="a" style="left:988px;top:0px;width:1px;height:600px;background:#5a5a5a"></div>
<div class="a" style="left:1px;top:598px;width:987px;height:1px;background:#a0a0a0"></div>
<div class="a" style="left:0px;top:599px;width:989px;height:1px;background:#5a5a5a"></div>
</body></html>
